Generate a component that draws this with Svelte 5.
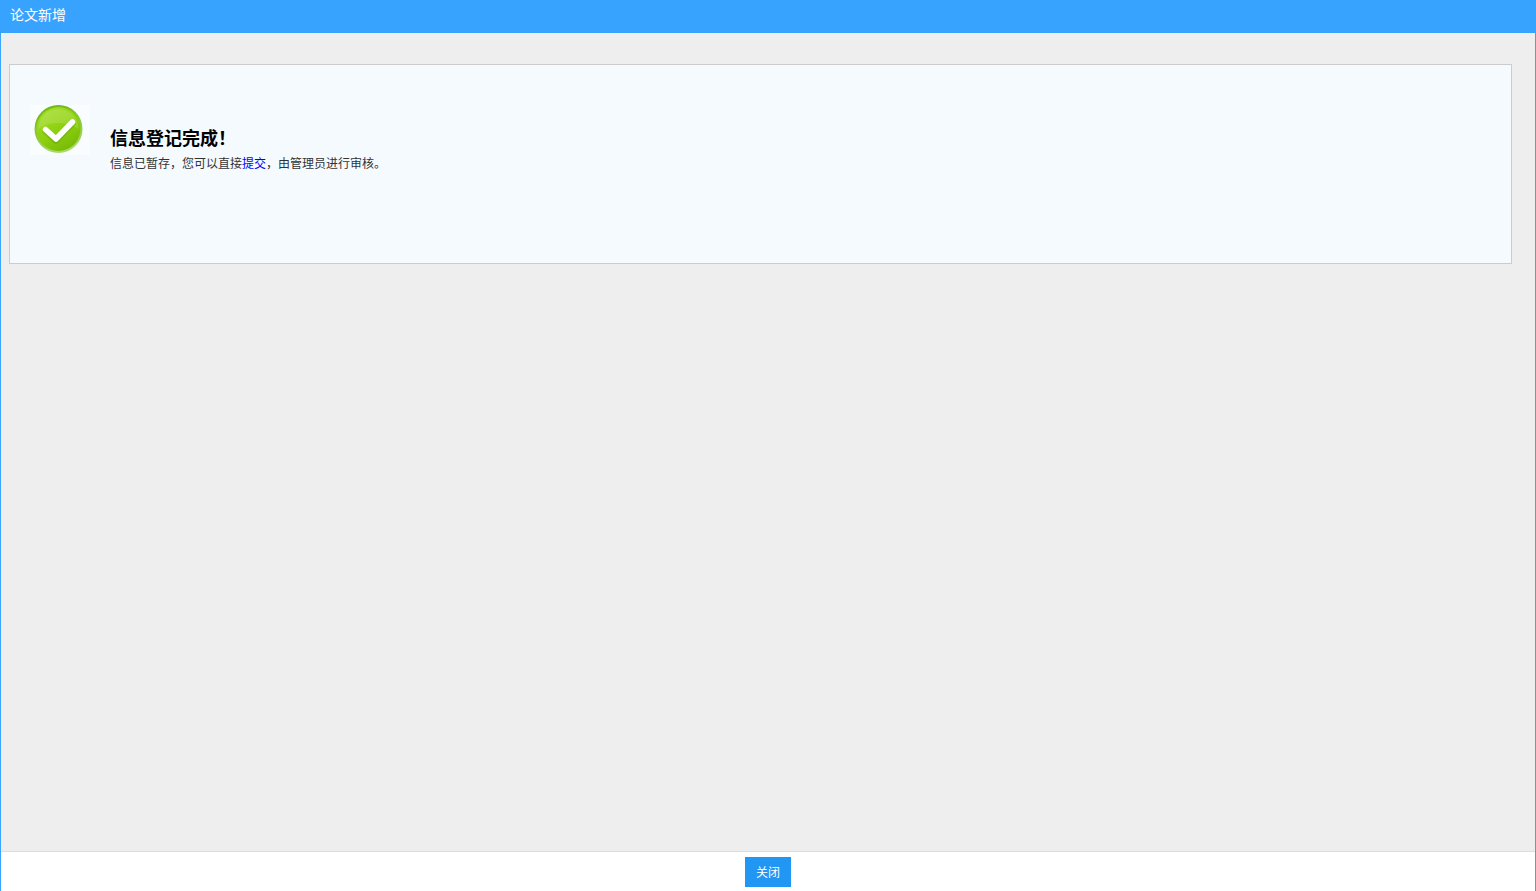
<script lang="ts">
  const title = "论文新增";
</script>

<div class="win">
  <header class="bar">{title}</header>

  <main class="body">
    <section class="card">
      <div class="icon" aria-hidden="true">
        <svg width="60" height="50" viewBox="0 0 60 50">
          <defs>
            <linearGradient id="disc" x1="0.2" y1="0" x2="0.8" y2="1">
              <stop offset="0" stop-color="#a4de2a" />
              <stop offset="0.55" stop-color="#8ccf0c" />
              <stop offset="1" stop-color="#74b808" />
            </linearGradient>
            <linearGradient id="rim" x1="0.3" y1="0" x2="0.6" y2="1">
              <stop offset="0" stop-color="#6eb60e" />
              <stop offset="1" stop-color="#acdc6c" />
            </linearGradient>
          </defs>
          <circle cx="28.500" cy="24" r="24" fill="url(#rim)" />
          <circle cx="28.500" cy="24" r="22" fill="url(#disc)" />
          <path d="M8.500 24a20 20 0 0 1 40 0c-10-8-30-8-40 0z" fill="#fff" opacity="0.14" />
          <path d="M15.500 24.500l10.500 9.500L42.500 17" fill="none" stroke="#5f9c0c" stroke-opacity="0.4" stroke-width="6.500" stroke-linecap="round" stroke-linejoin="round" transform="translate(0 1.500)" />
          <path d="M15.500 24.500l10.500 9.500L42.500 17" fill="none" stroke="#fff" stroke-width="5.500" stroke-linecap="round" stroke-linejoin="round" />
        </svg>
      </div>
      <div class="msg">
        <h1>信息登记完成！</h1>
        <p>信息已暂存，您可以直接<a href="#submit">提交</a>，由管理员进行审核。</p>
      </div>
    </section>
  </main>

  <footer class="foot">
    <button type="button">关闭</button>
  </footer>
</div>

<style>
  :global(body) {
    margin: 0;
    overflow: hidden;
  }
  .win {
    box-sizing: border-box;
    height: 891px;
    display: flex;
    flex-direction: column;
    border-left: 1px solid #3aa4ff;
    border-right: 1px solid #3aa4ff;
    font-family: "Noto Sans CJK SC", "Liberation Sans", sans-serif;
    background: #fff;
  }
  .bar {
    height: 33px;
    margin: 0 -1px;
    padding-left: 10px;
    line-height: 29px;
    font-size: 14px;
    color: #fff;
    background: #38a3ff;
  }
  .body {
    flex: 1;
    background: #eee;
    padding: 31px 23px 0 8px;
  }
  .card {
    box-sizing: border-box;
    height: 200px;
    display: flex;
    padding: 40px 0 0 20px;
    border: 1px solid #ccc;
    background: #f5fafe;
  }
  .icon {
    width: 60px;
    height: 50px;
    margin-right: 20px;
    background: #fafdff;
  }
  .icon svg {
    display: block;
  }
  .msg {
    padding-top: 19px;
  }
  h1 {
    margin: 0;
    font-size: 18px;
    line-height: 26px;
    font-weight: 700;
    color: #000;
  }
  p {
    margin: 0;
    padding-top: 1px;
    font-size: 12px;
    line-height: 24px;
    color: #333;
  }
  p a {
    color: #00f;
    text-decoration: none;
  }
  .foot {
    box-sizing: border-box;
    height: 40px;
    display: flex;
    justify-content: center;
    padding-top: 5px;
    border-top: 1px solid #ddd;
    background: #fff;
  }
  button {
    width: 46px;
    height: 30px;
    padding: 0 0 2px;
    border: 0;
    font: inherit;
    font-size: 12px;
    color: #fff;
    background: #2196f3;
  }
</style>
